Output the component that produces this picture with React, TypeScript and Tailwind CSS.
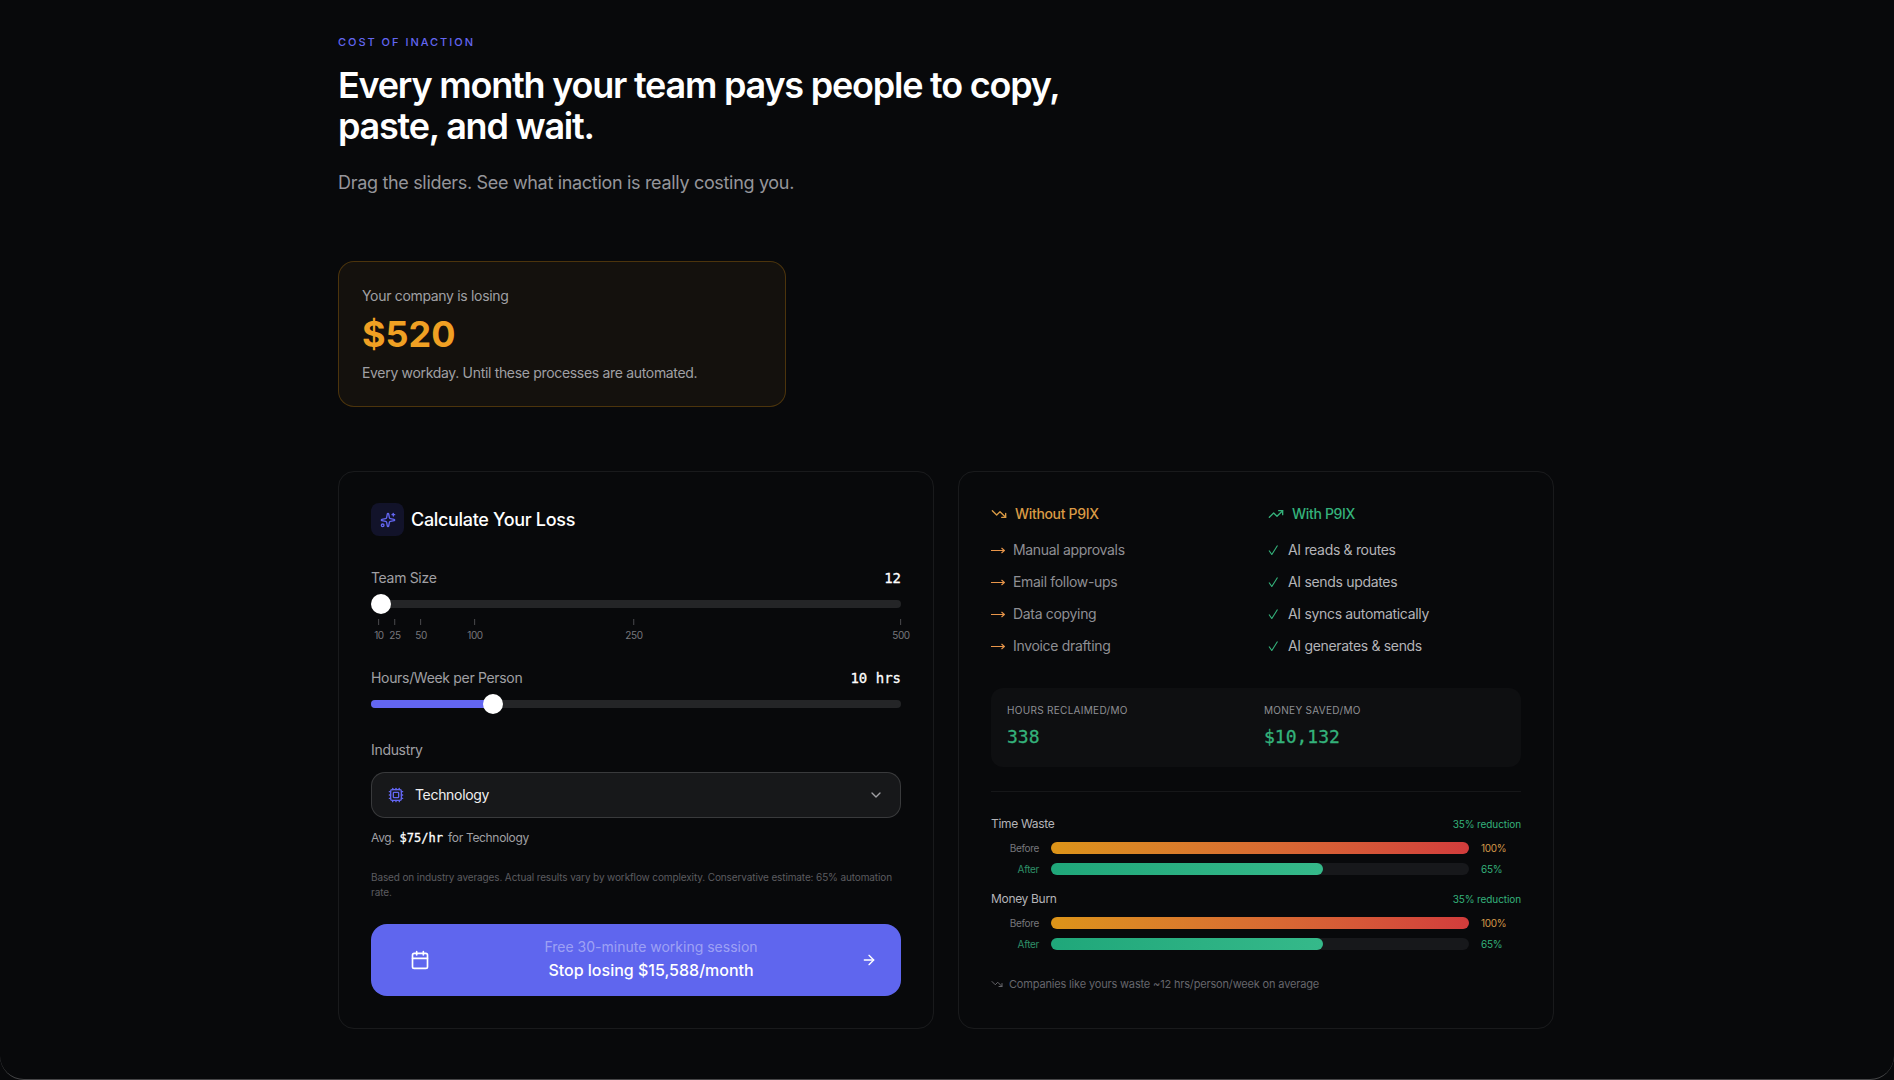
import { ArrowRight, Calendar, ChevronDown, Cpu, Sparkles, TrendingDown, TrendingUp } from 'lucide-react'

const mono = "font-['DejaVu_Sans_Mono','Liberation_Mono',monospace] tracking-normal [-webkit-text-stroke:0.3px_currentColor]"

const ticks = [
  { label: '10', left: 'left-[8px]' },
  { label: '25', left: 'left-[24px]' },
  { label: '50', left: 'left-[50px]' },
  { label: '100', left: 'left-[104px]' },
  { label: '250', left: 'left-[263px]' },
  { label: '500', left: 'left-[530px]' },
]

const withoutItems = ['Manual approvals', 'Email follow-ups', 'Data copying', 'Invoice drafting']
const withItems = ['AI reads & routes', 'AI sends updates', 'AI syncs automatically', 'AI generates & sends']

function Comparison({ title }: { title: string }) {
  return (
    <div>
      <div className="flex h-[18px] items-center justify-between">
        <span className="text-xs text-[#b4b4b8]">{title}</span>
        <span className="text-[10px] tracking-[-0.01em] text-[#34b27b]">35% reduction</span>
      </div>
      <div className="mt-[9px] flex h-3 items-center gap-3">
        <span className="w-12 text-right text-[10px] text-[#77777c]">Before</span>
        <div className="h-3 flex-1 rounded-full bg-gradient-to-r from-[#dc9418] to-[#d23c3c]" />
        <span className="w-10 text-[10px] text-[#d59a4a]">100%</span>
      </div>
      <div className="mt-[9px] flex h-3 items-center gap-3">
        <span className="w-12 text-right text-[10px] text-[#2f8f68]">After</span>
        <div className="h-3 flex-1 rounded-full bg-[#17181b]">
          <div className="h-3 w-[65%] rounded-full bg-gradient-to-r from-[#1fa77a] to-[#35b98a]" />
        </div>
        <span className="w-10 text-[10px] text-[#34b27b]">65%</span>
      </div>
    </div>
  )
}

export default function App() {
  return (
    <div className="bg-[#08090b]">
      <div className="flex h-screen flex-col overflow-hidden rounded-b-3xl border-b border-white/25 font-['Inter',sans-serif] tracking-[-0.02em] text-white">
        <div className="ml-[338px] w-[1216px] flex-1 pt-[35px]">
          <p className="text-[11px] leading-[14px] font-medium tracking-[0.18em] text-[#6366f1] uppercase">Cost of inaction</p>
          <h1 className="mt-4 w-[768px] text-[36px] leading-[41px] font-semibold tracking-[-0.034em]">
            Every month your team pays people to copy, paste, and wait.
          </h1>
          <p className="mt-[22px] text-lg leading-[28px] text-[#95959a]">Drag the sliders. See what inaction is really costing you.</p>

          <div className="mt-[64px] w-[448px] rounded-2xl border border-[#f59e0b]/25 bg-[#14110d] pt-6 pr-6 pb-[23px] pl-[23px]">
            <p className="text-sm leading-5 text-[#a0a0a4]">Your company is losing</p>
            <p className="mt-2 text-[36px] leading-[40px] font-bold tracking-normal text-[#f0a023]">$520</p>
            <p className="mt-[9px] text-sm leading-5 text-[#a0a0a4]">Every workday. Until these processes are automated.</p>
          </div>

          <div className="mt-[64px] grid h-[558px] grid-cols-2 gap-6">
            <div className="rounded-2xl border border-white/[0.07] px-8 pt-[31px]">
              <div className="flex items-center gap-[7px]">
                <div className="flex size-[33px] items-center justify-center rounded-lg bg-[#12132a]">
                  <Sparkles className="size-4 text-[#6366f1]" />
                </div>
                <h2 className="text-lg leading-7 font-medium">Calculate Your Loss</h2>
              </div>

              <div className="mt-8 flex h-5 items-center justify-between text-sm">
                <span className="text-[#a0a0a4]">Team Size</span>
                <span className={mono}>12</span>
              </div>
              <div className="relative mt-3 h-2 rounded-full bg-[#242527]">
                <div className="absolute top-[-6px] left-0 size-5 rounded-full bg-white" />
              </div>
              <div className="relative mt-[11px] h-[22px]">
                {ticks.map((t) => (
                  <div key={t.label} className={`absolute top-0 flex -translate-x-1/2 flex-col items-center ${t.left}`}>
                    <span className="h-[6px] w-px bg-[#4a4a4e]" />
                    <span className="mt-[3px] text-[10px] leading-[14px] text-[#77777c]">{t.label}</span>
                  </div>
                ))}
              </div>

              <div className="mt-[27px] flex h-5 items-center justify-between text-sm">
                <span className="text-[#a0a0a4]">Hours/Week per Person</span>
                <span className={mono}>10 hrs</span>
              </div>
              <div className="relative mt-3 h-2 rounded-full bg-[#242527]">
                <div className="h-2 w-[122px] rounded-full bg-[#6366f1]" />
                <div className="absolute top-[-6px] left-[112px] size-5 rounded-full bg-white" />
              </div>

              <p className="mt-8 text-sm leading-5 text-[#a0a0a4]">Industry</p>
              <div className="mt-3 flex h-[46px] items-center rounded-[14px] border border-white/15 bg-[#17181a] px-4">
                <Cpu className="size-4 text-[#6366f1]" />
                <span className="ml-[11px] flex-1 text-sm text-[#f0f0f0]">Technology</span>
                <ChevronDown className="size-4 text-[#a0a0a4]" />
              </div>
              <p className="mt-3 text-xs leading-4 text-[#a0a0a4]">
                Avg. <span className={`${mono} mx-[2px] text-white`}>$75/hr</span> for Technology
              </p>

              <p className="mt-6 text-[10px] leading-[15px] tracking-[-0.012em] text-[#5c5c60]">
                Based on industry averages. Actual results vary by workflow complexity. Conservative estimate: 65% automation rate.
              </p>

              <div className="mt-6 flex h-[72px] items-center rounded-2xl bg-[#5f66ee] pr-6 pl-[39px]">
                <Calendar className="size-5" />
                <div className="flex-1 pb-[2px] pl-[11px] text-center tracking-normal">
                  <p className="text-sm leading-5 text-white/40">Free 30-minute working session</p>
                  <p className="mt-[1px] text-base leading-6 font-medium">Stop losing $15,588/month</p>
                </div>
                <ArrowRight className="size-4" />
              </div>
            </div>

            <div className="rounded-2xl border border-white/[0.07] px-8 pt-8">
              <div className="grid grid-cols-[277px_1fr]">
                <div>
                  <div className="flex h-5 items-center gap-2 text-sm font-medium text-[#d99a45]">
                    <TrendingDown className="size-4" />
                    Without P9IX
                  </div>
                  <ul className="mt-[10px]">
                    {withoutItems.map((item) => (
                      <li key={item} className="flex h-8 items-center gap-2 text-sm text-[#8f8f94]">
                        <svg viewBox="0 0 14 10" className="h-[10px] w-[14px] text-[#e8954a]" fill="none" stroke="currentColor" strokeWidth="1.2">
                          <path d="M0 5.5 H13.5 M10.5 3 L13.5 5.5 L10.5 8" />
                        </svg>
                        {item}
                      </li>
                    ))}
                  </ul>
                </div>
                <div>
                  <div className="flex h-5 items-center gap-2 text-sm font-medium text-[#34b27b]">
                    <TrendingUp className="size-4" />
                    With P9IX
                  </div>
                  <ul className="mt-[10px]">
                    {withItems.map((item) => (
                      <li key={item} className="flex h-8 items-center gap-2 text-sm text-[#b4b4b8]">
                        <svg viewBox="0 0 12 10" className="h-[10px] w-3 text-[#34b27b]" fill="none" stroke="currentColor" strokeWidth="1.1">
                          <path d="M1 5.5 L3.8 9.5 L9.5 0.5" />
                        </svg>
                        {item}
                      </li>
                    ))}
                  </ul>
                </div>
              </div>

              <div className="mt-[26px] grid h-[79px] grid-cols-2 gap-4 rounded-xl bg-[#0e0f11] px-4 pt-[15px]">
                <div>
                  <p className="text-[10px] leading-[15px] tracking-[0.03em] text-[#8f8f94] uppercase">Hours reclaimed/mo</p>
                  <p className={`${mono} mt-[5px] text-lg leading-7 text-[#34b27b]`}>338</p>
                </div>
                <div>
                  <p className="text-[10px] leading-[15px] tracking-[0.03em] text-[#8f8f94] uppercase">Money saved/mo</p>
                  <p className={`${mono} mt-[5px] text-lg leading-7 text-[#34b27b]`}>$10,132</p>
                </div>
              </div>

              <div className="mt-6 h-px bg-white/[0.06]" />

              <div className="mt-[23px] flex flex-col gap-[15px]">
                <Comparison title="Time Waste" />
                <Comparison title="Money Burn" />
              </div>

              <p className="mt-[26px] flex items-center gap-[6px] text-[11px] leading-4 tracking-[-0.015em] text-[#66666b]">
                <TrendingDown className="size-3" />
                Companies like yours waste ~12 hrs/person/week on average
              </p>
            </div>
          </div>
        </div>
      </div>
    </div>
  )
}
